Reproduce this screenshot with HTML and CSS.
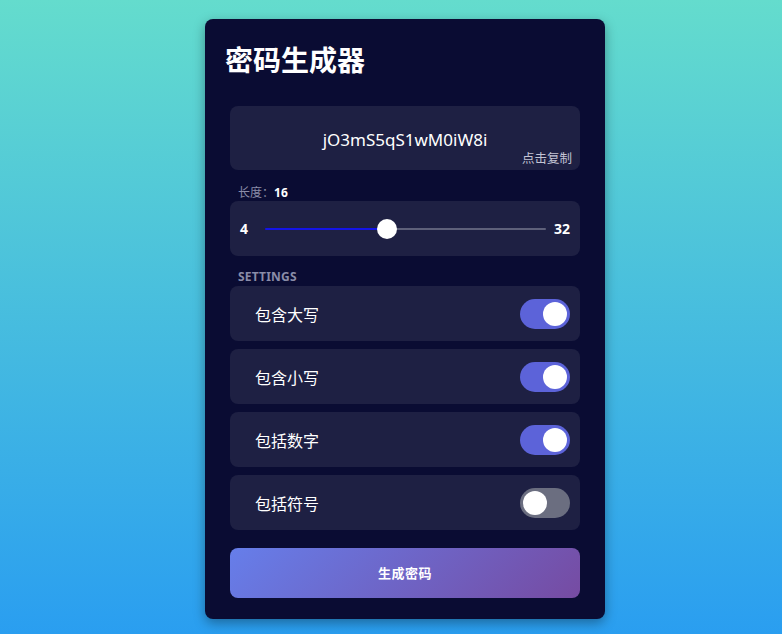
FILE: index.html
```html
<!DOCTYPE html>
<html lang="zh">
<head>
<meta charset="utf-8">
<title>密码生成器</title>
<link rel="stylesheet" href="styles.css">
</head>
<body>
<div class="card">
  <h1 class="title">密码生成器</h1>
  <div class="content">
    <div class="result">
      <span class="password">jO3mS5qS1wM0iW8i</span>
      <span class="copy">点击复制</span>
    </div>
    <div class="label">长度：<b class="value">16</b></div>
    <div class="slider-box">
      <span class="num">4</span>
      <input class="range" type="range" min="4" max="32" value="16" style="--p:42.86%">
      <span class="num">32</span>
    </div>
    <div class="label caps">SETTINGS</div>
    <div class="settings">
      <div class="row"><span>包含大写</span><span class="toggle on"><span class="knob"></span></span></div>
      <div class="row"><span>包含小写</span><span class="toggle on"><span class="knob"></span></span></div>
      <div class="row"><span>包括数字</span><span class="toggle on"><span class="knob"></span></span></div>
      <div class="row"><span>包括符号</span><span class="toggle"><span class="knob"></span></span></div>
    </div>
    <button class="generate">生成密码</button>
  </div>
</div>
</body>
</html>
```

FILE: styles.css
```css
* { box-sizing: border-box; }
html, body { height: 100%; }
body {
  margin: 0;
  background: linear-gradient(to bottom, #64dccd 0%, #2a9ef0 100%);
  font-family: "Noto Sans", "Noto Sans CJK SC", sans-serif;
  color: #fff;
  padding-top: 19px;
  padding-left: 205px;
}
.card {
  width: 400px;
  height: 600px;
  background: #0a0c33;
  border-radius: 8px;
  padding: 20px;
  box-shadow: 0 4px 12px rgba(0, 0, 0, 0.35);
}
.title {
  margin: 0 0 27px;
  height: 40px;
  font-size: 28px;
  line-height: 40px;
  font-weight: 700;
  font-family: "Noto Sans CJK SC", sans-serif;
}
.content { margin: 0 5px; }
.result {
  position: relative;
  height: 64px;
  background: #1e2043;
  border-radius: 8px;
  display: flex;
  align-items: center;
  justify-content: center;
}
.password {
  font-size: 17px;
  margin-top: 2px;
}
.copy {
  position: absolute;
  right: 8px;
  bottom: 3px;
  font-size: 12.5px;
  color: #c3c4d4;
  font-family: "Noto Sans CJK SC", sans-serif;
}
.label {
  height: 17px;
  margin: 13px 0 1px;
  padding-left: 8px;
  font-size: 12px;
  line-height: 17px;
  color: #8a8ca8;
  font-family: "Noto Sans CJK SC", sans-serif;
  overflow: visible;
}
.value { color: #fff; font-family: "Noto Sans", sans-serif; }
.caps { font-weight: 700; margin: 12px 0 1px; letter-spacing: 0.2px; font-family: "Noto Sans", sans-serif; }
.slider-box {
  height: 55px;
  background: #1e2043;
  border-radius: 8px;
  display: flex;
  align-items: center;
  padding: 0 10px;
}
.num { font-size: 14px; font-weight: 700; }
.range {
  -webkit-appearance: none;
  appearance: none;
  flex: 1;
  margin: 0 8px 0 17px;
  height: 20px;
  background: transparent;
}
.range::-webkit-slider-runnable-track {
  height: 2px;
  background: linear-gradient(to right, #1414e6 0, #1414e6 var(--p), #5e607a var(--p), #5e607a 100%);
  border-radius: 1px;
}
.range::-webkit-slider-thumb {
  -webkit-appearance: none;
  width: 20px;
  height: 20px;
  border-radius: 50%;
  background: #fff;
  margin-top: -9px;
  border: none;
}
.settings { display: flex; flex-direction: column; gap: 8px; }
.row {
  height: 55px;
  background: #1e2043;
  border-radius: 8px;
  display: flex;
  align-items: center;
  justify-content: space-between;
  padding: 0 10px 0 25px;
  font-size: 16px;
  font-family: "Noto Sans CJK SC", sans-serif;
}
.toggle {
  width: 50px;
  height: 30px;
  border-radius: 15px;
  background: #6b6e80;
  display: flex;
  align-items: center;
  padding: 0 3px;
}
.toggle.on { background: #5c63d9; justify-content: flex-end; }
.knob {
  width: 24px;
  height: 24px;
  border-radius: 50%;
  background: #fff;
}
.generate {
  display: block;
  width: 100%;
  height: 50px;
  margin-top: 18px;
  border: none;
  border-radius: 8px;
  background: linear-gradient(135deg, #667eea 0%, #764ba2 100%);
  color: #fff;
  font-size: 13px;
  font-weight: 700;
  font-family: "Noto Sans CJK SC", sans-serif;
  letter-spacing: 0.5px;
  padding: 0 0 2px;
}
```
